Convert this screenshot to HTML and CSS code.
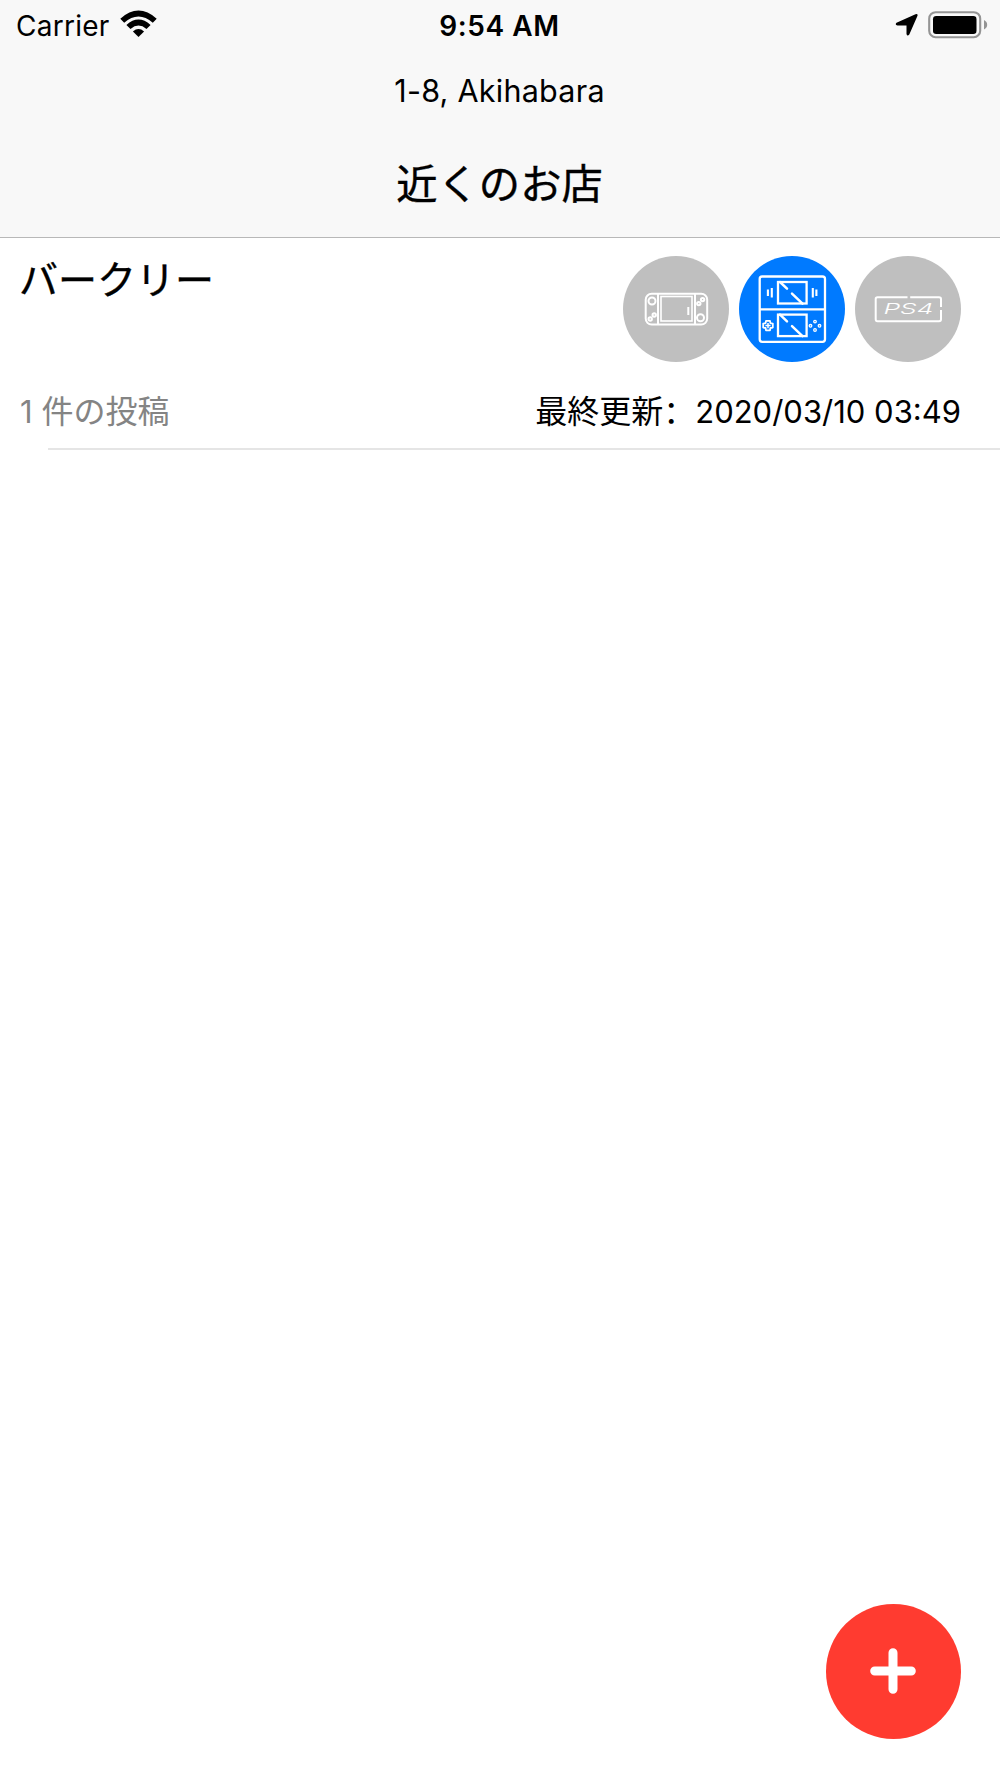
FILE: index.html
```html
<!DOCTYPE html>
<html lang="ja">
<head>
    <meta charset="UTF-8">
    <meta name="viewport" content="width=device-width, initial-scale=1.0">
    <title>近くのお店</title>
    <link rel="stylesheet" href="styles.css">
</head>
<body>

    <header class="header">
        <div class="status-bar">
            <div class="status-left">
                <span class="carrier">Carrier</span>
                <svg class="wifi" width="38" height="28" viewBox="0 0 38 28">
                    <path d="M0.3 8.7 Q18.5 -7.6 36.7 8.7 L32.8 12.8 Q18.5 0.2 4.2 12.8 Z"/>
                    <path d="M6.4 14.9 Q18.5 4.2 30.6 14.9 L26.5 18.9 Q18.5 12.2 10.5 18.9 Z"/>
                    <path d="M12.9 21.4 Q18.5 16.6 24.1 21.4 L18.5 27 Z"/>
                </svg>
            </div>
            <span class="clock">9:54 AM</span>
            <div class="status-right">
                <svg class="location" width="24" height="24" viewBox="0 0 24 24">
                    <path d="M1.5 9.7 L20.5 1.2 Q23.2 0.5 22.4 3 L14.3 21.5 Q12.3 23.8 11.5 21 V12.5 H2.5 Q-0.4 11.8 1.5 9.7 Z"/>
                </svg>
                <svg class="battery" width="60" height="28" viewBox="0 0 60 28">
                    <rect x="1.2" y="1.2" width="51" height="25" rx="6.5" fill="none" stroke="#949494" stroke-width="2.1"/>
                    <rect x="5" y="5" width="43.5" height="18" rx="3.2"/>
                    <path d="M56 9 Q59.2 10.8 59.2 13.8 Q59.2 16.8 56 18.6 Z" fill="#949494"/>
                </svg>
            </div>
        </div>
        <p class="address">1-8, Akihabara</p>
        <h1 class="title">近くのお店</h1>
    </header>

    <main class="shop-list">
        <article class="shop">
            <div class="shop-top">
                <h2 class="shop-name">バークリー</h2>
                <div class="consoles">
                    <div class="console">
                        <svg width="106" height="106" viewBox="0 0 106 106" fill="none" stroke="#fff" stroke-width="2">
                            <rect x="22.7" y="37.8" width="61.5" height="30.8" rx="6"/>
                            <path d="M35 38 V68 M72 38 V68"/>
                            <rect x="38" y="40.5" width="31" height="24.5" stroke-width="1.6"/>
                            <path d="M65.3 51 V59"/>
                            <circle cx="29" cy="45" r="3.5"/>
                            <circle cx="27.2" cy="63" r="1.7"/>
                            <circle cx="31.2" cy="59" r="1.7"/>
                            <circle cx="75.8" cy="47.6" r="1.7"/>
                            <circle cx="79.6" cy="43.6" r="1.7"/>
                            <circle cx="77.5" cy="61.7" r="3.5"/>
                        </svg>
                    </div>
                    <div class="console active">
                        <svg width="106" height="106" viewBox="0 0 106 106" fill="none" stroke="#fff" stroke-width="2.3">
                            <rect x="20.7" y="20.5" width="65.3" height="65.3" rx="2.5"/>
                            <path d="M21 53.3 H86"/>
                            <rect x="39" y="26" width="28.6" height="21.5"/>
                            <rect x="39" y="58.6" width="28.6" height="21.5"/>
                            <path d="M41 26 L48 32.7 M53 37.6 L63.5 47.6 M41 58.6 L48 65.3 M53 70.2 L63.5 80.2" stroke-width="2.5" stroke-linecap="round"/>
                            <path d="M28.9 33.5 V40 M32.8 32 V41.5 M73.8 32 V41.5 M77.4 33.5 V40" stroke-width="2.1"/>
                            <path d="M27 64.8 H31 L31.4 67.2 L33.8 67.6 V71.6 L31.4 72 L31 74.4 H27 L26.6 72 L24.2 71.6 V67.6 L26.6 67.2 Z" stroke-width="1.8" stroke-linejoin="round"/>
                            <path d="M29 67 V72.2 M26.4 69.6 H31.6" stroke-width="1.5"/>
                            <g stroke-width="1.3">
                                <circle cx="76" cy="65.6" r="1.3"/>
                                <circle cx="71.5" cy="69.8" r="1.3"/>
                                <circle cx="80.5" cy="69.8" r="1.3"/>
                                <circle cx="76" cy="74" r="1.3"/>
                            </g>
                        </svg>
                    </div>
                    <div class="console">
                        <svg width="106" height="106" viewBox="0 0 106 106" fill="none" stroke="#fff" stroke-width="2">
                            <path d="M52.5 41.2 H22.5 Q20.7 41.2 20.7 43 V63.3 Q20.7 65.2 22.5 65.2 H84 Q86 65.2 86 63.3 V54"/>
                            <path d="M55.2 41.2 H84 Q86 41.2 86 43 V51"/>
                            <text class="ps4" x="28.5" y="58.3" textLength="50" lengthAdjust="spacingAndGlyphs">PS4</text>
                        </svg>
                    </div>
                </div>
            </div>
            <div class="shop-bottom">
                <span class="post-count"><span class="num">1</span>件の投稿</span>
                <span class="updated">最終更新<span class="colon" lang="zh-CN">：</span><time class="date">2020/03/10 03:49</time></span>
            </div>
        </article>
    </main>

    <button class="add-button" aria-label="追加">
        <svg width="46" height="46" viewBox="0 0 46 46">
            <path d="M23 4.7 V41.3 M4.7 23 H41.3" stroke="#fff" stroke-width="9" stroke-linecap="round"/>
        </svg>
    </button>

</body>
</html>
```

FILE: styles.css
```css
* {
    box-sizing: border-box;
}
body {
    margin: 0;
    min-height: 1778px;
    background: #ffffff;
    color: #000000;
    font-family: Inter, 'Noto Sans CJK JP', sans-serif;
}
h1, h2, p {
    margin: 0;
    font-weight: 400;
}
svg {
    display: block;
}

/* ヘッダー */
.header {
    height: 238px;
    background: #f8f8f8;
    border-bottom: 1px solid #b8b8b8;
    text-align: center;
}
.status-bar {
    display: grid;
    grid-template-columns: 1fr auto 1fr;
    align-items: center;
    height: 51px;
    padding: 0 12px 0 16px;
}
.status-left, .status-right {
    display: flex;
    align-items: center;
}
.status-left {
    gap: 10px;
    font-size: 28px;
}
.wifi {
    margin-top: -4px;
}
.carrier {
    letter-spacing: 0.25px;
}
.clock {
    margin-right: 5px;
    font-size: 28px;
    font-weight: 600;
    letter-spacing: 0.6px;
}
.status-right {
    justify-content: flex-end;
    gap: 9px;
    margin-top: -2px;
}
.address {
    height: 80px;
    padding-right: 1px;
    line-height: 79px;
    font-size: 30.5px;
    letter-spacing: 0.25px;
}
.title {
    height: 106px;
    padding-right: 1px;
    line-height: 106px;
    font-size: 41.3px;
    -webkit-text-stroke: 0.4px #000000;
}

/* お店の一覧 */
.shop {
    height: 212px;
    padding: 18px 39px 0 20px;
    background: linear-gradient(#e5e5e5, #e5e5e5) right bottom / 952px 2px no-repeat;
}
.shop-top {
    display: flex;
    justify-content: space-between;
    height: 106px;
}
.shop-name {
    margin-left: -1px;
    line-height: 48px;
    font-size: 39px;
    -webkit-text-stroke: 0.4px #000000;
}
.consoles {
    display: flex;
    gap: 10px;
}
.console {
    width: 106px;
    height: 106px;
    border-radius: 50%;
    background: #bfbfbf;
}
.console.active {
    background: #007aff;
}
.ps4 {
    fill: #ffffff;
    stroke: none;
    font-family: Inter, sans-serif;
    font-size: 14.5px;
    font-style: italic;
    font-weight: 300;
}
.shop-bottom {
    display: flex;
    justify-content: space-between;
    padding-top: 26px;
    line-height: 48px;
    font-size: 32px;
}
.post-count {
    color: #848484;
}
.num {
    margin-right: 9px;
    font-size: 31px;
}
.colon {
    line-height: 1;
    font-family: 'Noto Sans CJK SC', sans-serif;
}
.date {
    font-size: 31px;
}

/* 追加ボタン */
.add-button {
    position: fixed;
    right: 39px;
    bottom: 39px;
    display: flex;
    align-items: center;
    justify-content: center;
    width: 135px;
    height: 135px;
    padding: 0 2px 2px 0;
    border: none;
    border-radius: 50%;
    background: #ff3b30;
    cursor: pointer;
}
```
